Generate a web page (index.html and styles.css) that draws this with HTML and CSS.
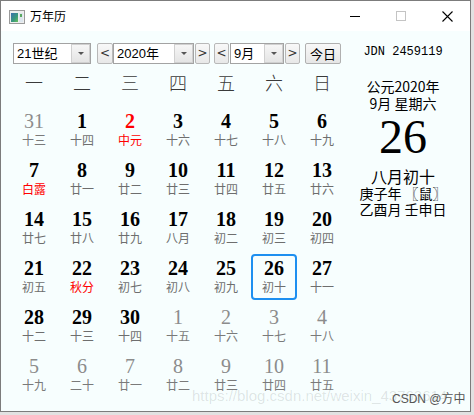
FILE: index.html
```html
<!DOCTYPE html>
<html lang="zh-CN">
<head>
<meta charset="utf-8">
<title>万年历</title>
<link rel="stylesheet" href="styles.css">
</head>
<body>
<div class="window">
  <div class="titlebar">
    <svg class="appicon" width="16" height="14" viewBox="0 0 16 14">
      <defs>
        <linearGradient id="g1" x1="0" y1="0" x2="1" y2="1">
          <stop offset="0" stop-color="#3a6fb0"/>
          <stop offset="0.6" stop-color="#3a9a7a"/>
          <stop offset="1" stop-color="#6cbf5a"/>
        </linearGradient>
      </defs>
      <rect x="0.5" y="0.5" width="15" height="13" fill="#eeeeee" stroke="#9a9a9a"/>
      <rect x="2" y="3" width="7" height="9" fill="url(#g1)"/>
      <rect x="10" y="3" width="4" height="9" fill="#dde6ee"/>
      <rect x="11" y="4" width="2" height="3" fill="#5aa860"/>
    </svg>
    <span class="title">万年历</span>
    <div class="winbtns">
      <span class="wbtn"><svg width="10" height="10" viewBox="0 0 10 10"><line x1="0" y1="5.5" x2="10" y2="5.5" stroke="#000" stroke-width="1"/></svg></span>
      <span class="wbtn"><svg width="10" height="10" viewBox="0 0 10 10"><rect x="0.5" y="0.5" width="9" height="9" fill="none" stroke="#c4c4c4" stroke-width="1"/></svg></span>
      <span class="wbtn"><svg width="11" height="11" viewBox="0 0 11 11"><path d="M0.5 0.5 L10.5 10.5 M10.5 0.5 L0.5 10.5" stroke="#000" stroke-width="1.1" fill="none"/></svg></span>
    </div>
  </div>
  <div class="content">
    <div class="main">
      <div class="toolbar">
        <div class="combo c1"><span class="field">21世纪</span><span class="drop"><i></i></span></div>
        <div class="nav g6 wide">&lt;</div>
        <div class="combo c2"><span class="field">2020年</span><span class="drop"><i></i></span></div>
        <div class="nav g1">&gt;</div>
        <div class="nav g4">&lt;</div>
        <div class="combo c3 g1"><span class="field">9月</span><span class="drop"><i></i></span></div>
        <div class="nav g1">&gt;</div>
        <div class="today">今日</div>
      </div>
      <div class="grid">
        <div class="wk">一</div><div class="wk">二</div><div class="wk">三</div><div class="wk">四</div><div class="wk">五</div><div class="wk">六</div><div class="wk">日</div>

        <div class="day other"><b>31</b><span>十三</span></div>
        <div class="day"><b>1</b><span>十四</span></div>
        <div class="day red"><b>2</b><span>中元</span></div>
        <div class="day"><b>3</b><span>十六</span></div>
        <div class="day"><b>4</b><span>十七</span></div>
        <div class="day"><b>5</b><span>十八</span></div>
        <div class="day"><b>6</b><span>十九</span></div>

        <div class="day term"><b>7</b><span>白露</span></div>
        <div class="day"><b>8</b><span>廿一</span></div>
        <div class="day"><b>9</b><span>廿二</span></div>
        <div class="day"><b>10</b><span>廿三</span></div>
        <div class="day"><b>11</b><span>廿四</span></div>
        <div class="day"><b>12</b><span>廿五</span></div>
        <div class="day"><b>13</b><span>廿六</span></div>

        <div class="day"><b>14</b><span>廿七</span></div>
        <div class="day"><b>15</b><span>廿八</span></div>
        <div class="day"><b>16</b><span>廿九</span></div>
        <div class="day"><b>17</b><span>八月</span></div>
        <div class="day"><b>18</b><span>初二</span></div>
        <div class="day"><b>19</b><span>初三</span></div>
        <div class="day"><b>20</b><span>初四</span></div>

        <div class="day"><b>21</b><span>初五</span></div>
        <div class="day term"><b>22</b><span>秋分</span></div>
        <div class="day"><b>23</b><span>初七</span></div>
        <div class="day"><b>24</b><span>初八</span></div>
        <div class="day"><b>25</b><span>初九</span></div>
        <div class="day sel"><b>26</b><span>初十</span></div>
        <div class="day"><b>27</b><span>十一</span></div>

        <div class="day"><b>28</b><span>十二</span></div>
        <div class="day"><b>29</b><span>十三</span></div>
        <div class="day"><b>30</b><span>十四</span></div>
        <div class="day other"><b>1</b><span>十五</span></div>
        <div class="day other"><b>2</b><span>十六</span></div>
        <div class="day other"><b>3</b><span>十七</span></div>
        <div class="day other"><b>4</b><span>十八</span></div>

        <div class="day other"><b>5</b><span>十九</span></div>
        <div class="day other"><b>6</b><span>二十</span></div>
        <div class="day other"><b>7</b><span>廿一</span></div>
        <div class="day other"><b>8</b><span>廿二</span></div>
        <div class="day other"><b>9</b><span>廿三</span></div>
        <div class="day other"><b>10</b><span>廿四</span></div>
        <div class="day other"><b>11</b><span>廿五</span></div>
      </div>
    </div>
    <div class="side">
      <div class="jdn">JDN 2459119</div>
      <div class="ad">公元2020年</div>
      <div class="week">9月 星期六</div>
      <div class="big">26</div>
      <div class="lunar">八月初十</div>
      <div class="gz">庚子年 〖鼠〗</div>
      <div class="gz">乙酉月 壬申日</div>
    </div>
  </div>
  <div class="wm-url">https://blog.csdn.net/weixin_43763614</div>
  <div class="wm-csdn">CSDN @方中</div>
</div>
</body>
</html>
```
FILE: styles.css
```css
html, body {
  margin: 0;
  padding: 0;
}
body {
  width: 474px;
  height: 415px;
  overflow: hidden;
  background: #e2e2e2;
  font-family: "Noto Sans CJK SC", sans-serif;
}
.window {
  position: relative;
  width: 471px;
  height: 412px;
  box-sizing: border-box;
  border: 1px solid #7c7c7c;
  background: #f7fefe;
  display: flex;
  flex-direction: column;
  overflow: hidden;
}
.titlebar {
  height: 30px;
  flex: none;
  background: #ffffff;
  display: flex;
  align-items: center;
}
.appicon {
  margin-left: 8px;
  margin-top: 1px;
  flex: none;
}
.title {
  margin-left: 5px;
  font-size: 12px;
  line-height: 14px;
  color: #000;
  font-family: "Noto Sans CJK SC", sans-serif;
}
.winbtns {
  margin-left: auto;
  display: flex;
  height: 30px;
}
.wbtn {
  width: 46px;
  height: 30px;
  display: flex;
  align-items: center;
  justify-content: center;
}
.content {
  flex: 1;
  display: flex;
}
.main {
  width: 336px;
  padding: 12px 0 0 9px;
  flex: none;
}
.toolbar {
  display: flex;
  height: 21px;
  margin-left: 3px;
  font-family: "Liberation Sans", "Noto Sans CJK SC", sans-serif;
  font-size: 13px;
}
.combo {
  box-sizing: border-box;
  height: 21px;
  border: 1px solid #a3a3a3;
  background: #fff;
  display: flex;
}
.c1 { width: 78px; }
.c2 { width: 81px; }
.c3 { width: 54px; }
.field {
  flex: 1;
  padding-left: 3px;
  line-height: 19px;
  color: #000;
  white-space: nowrap;
}
.drop {
  width: 19px;
  box-sizing: border-box;
  border: 1px solid #d0d0d0;
  background: linear-gradient(#f6f6f6, #e4e4e4);
  display: flex;
  align-items: center;
  justify-content: center;
}
.drop i {
  width: 0;
  height: 0;
  border-left: 3px solid transparent;
  border-right: 3px solid transparent;
  border-top: 3px solid #555;
}
.nav {
  box-sizing: border-box;
  width: 15px;
  height: 21px;
  border: 1px solid #b8b8b8;
  border-radius: 2px;
  background: linear-gradient(#f8f8f8, #e8e8e8);
  font-size: 12px;
  line-height: 19px;
  text-align: center;
  color: #333;
  font-family: "DejaVu Sans", sans-serif;
}
.nav.wide { width: 16px; }
.g6 { margin-left: 6px; }
.g4 { margin-left: 4px; }
.g1 { margin-left: 1px; }
.today {
  box-sizing: border-box;
  margin-left: 5px;
  width: 36px;
  height: 21px;
  border: 1px solid #b0b0b0;
  border-radius: 2px;
  background: linear-gradient(#f8f8f8, #e6e6e6);
  text-align: center;
  line-height: 19px;
  font-size: 13px;
  font-family: "Noto Sans CJK SC", sans-serif;
}
.grid {
  margin-top: 4px;
  display: grid;
  grid-template-columns: repeat(7, 48px);
  grid-template-rows: 39px repeat(6, 49px);
}
.wk {
  font-size: 18px;
  line-height: 29px;
  text-align: center;
  color: #3a3a3a;
  font-family: "Noto Sans CJK SC", sans-serif;
  font-weight: 300;
}
.day {
  box-sizing: border-box;
  height: 48px;
  padding-top: 3px;
  display: flex;
  flex-direction: column;
  align-items: center;
  position: relative;
}
.day b {
  font-family: "Liberation Serif", serif;
  font-weight: bold;
  font-size: 20px;
  line-height: 22px;
  color: #000;
}
.day span {
  font-size: 12px;
  line-height: 14px;
  margin-top: 1px;
  color: #6e6e6e;
  font-family: "Noto Sans CJK SC", sans-serif;
}
.day.other b {
  font-weight: normal;
  color: #8c8c8c;
}
.day.other span { color: #7a7a7a; }
.day.red b { color: #ff0000; }
.day.red span, .day.term span { color: #ff0000; }
.day.sel::after {
  content: "";
  position: absolute;
  left: 1px;
  top: 0;
  width: 46px;
  height: 46px;
  box-sizing: border-box;
  border: 2px solid #1e8ff0;
  border-radius: 4px;
}
.side {
  width: 114px;
  flex: none;
  padding-top: 13px;
  text-align: center;
  color: #000;
}
.jdn {
  font-family: "Liberation Mono", monospace;
  font-size: 12px;
  line-height: 16px;
}
.ad, .week {
  font-family: "Noto Sans CJK SC", sans-serif;
  font-size: 14px;
  line-height: 17px;
}
.ad { margin-top: 18px; }
.big {
  font-family: "Liberation Serif", serif;
  font-size: 48px;
  line-height: 48px;
  margin-top: 1px;
}
.lunar {
  font-family: "Noto Sans CJK SC", sans-serif;
  font-size: 16px;
  line-height: 18px;
  margin-top: 6px;
}
.gz {
  font-family: "Noto Sans CJK SC", sans-serif;
  font-size: 14px;
  line-height: 16px;
}
.wm-url {
  position: absolute;
  left: 191px;
  top: 386px;
  font-family: "Liberation Sans", sans-serif;
  font-size: 15px;
  line-height: 17px;
  color: rgba(0, 0, 0, 0.11);
  white-space: nowrap;
}
.wm-csdn {
  position: absolute;
  left: 391px;
  top: 391px;
  font-family: "Liberation Sans", "Noto Sans CJK SC", sans-serif;
  font-size: 12px;
  line-height: 14px;
  color: #555;
  white-space: nowrap;
}
```
